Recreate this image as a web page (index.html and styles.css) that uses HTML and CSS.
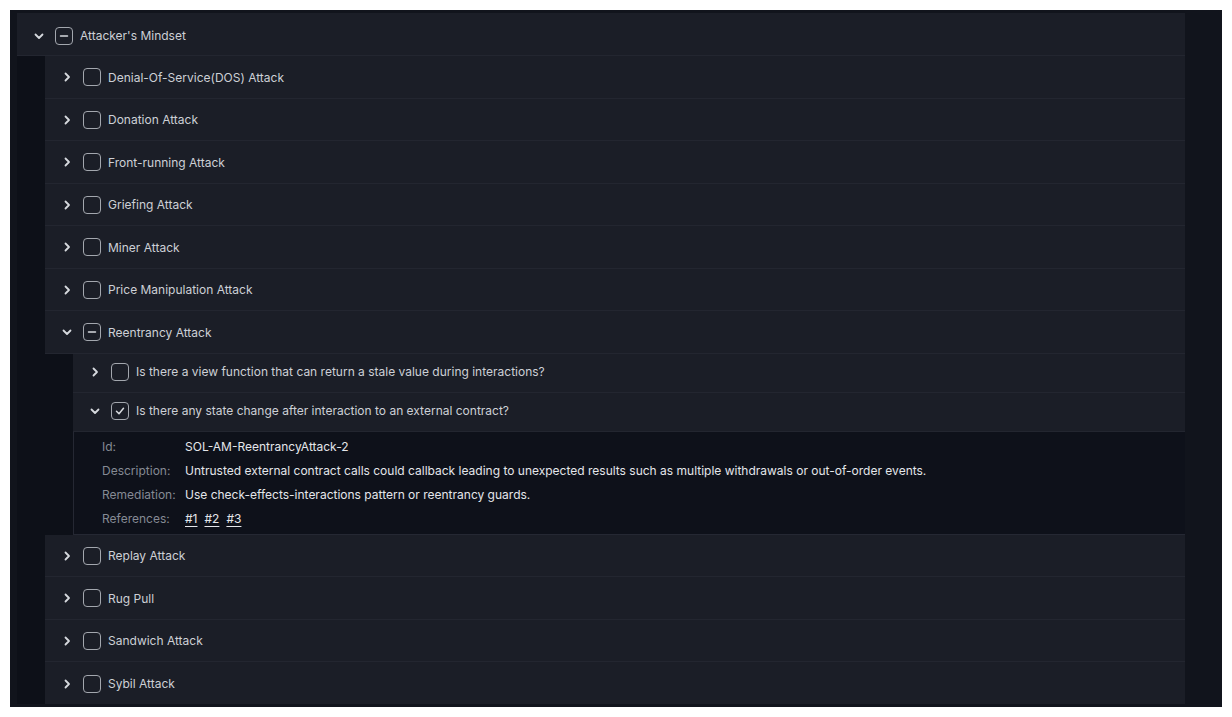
FILE: index.html
```html
<!DOCTYPE html>
<html>
<head>
<meta charset="utf-8">
<link rel="stylesheet" href="styles.css">
</head>
<body>
<div class="frame">
  <div class="tree">
    <div class="row lvl0">
      <svg class="chev" viewBox="0 0 12 12"><path d="M2.5 4.5 L6 8 L9.5 4.5"/></svg>
      <span class="cb"><svg viewBox="0 0 16 16"><path d="M4.5 8 H11.5"/></svg></span>
      <span class="label">Attacker's Mindset</span>
    </div>
    <div class="children">
      <div class="row lvl1"><svg class="chev" viewBox="0 0 12 12"><path d="M4.5 2.5 L8 6 L4.5 9.5"/></svg><span class="cb"></span><span class="label">Denial-Of-Service(DOS) Attack</span></div>
      <div class="row lvl1"><svg class="chev" viewBox="0 0 12 12"><path d="M4.5 2.5 L8 6 L4.5 9.5"/></svg><span class="cb"></span><span class="label">Donation Attack</span></div>
      <div class="row lvl1"><svg class="chev" viewBox="0 0 12 12"><path d="M4.5 2.5 L8 6 L4.5 9.5"/></svg><span class="cb"></span><span class="label">Front-running Attack</span></div>
      <div class="row lvl1"><svg class="chev" viewBox="0 0 12 12"><path d="M4.5 2.5 L8 6 L4.5 9.5"/></svg><span class="cb"></span><span class="label">Griefing Attack</span></div>
      <div class="row lvl1"><svg class="chev" viewBox="0 0 12 12"><path d="M4.5 2.5 L8 6 L4.5 9.5"/></svg><span class="cb"></span><span class="label">Miner Attack</span></div>
      <div class="row lvl1"><svg class="chev" viewBox="0 0 12 12"><path d="M4.5 2.5 L8 6 L4.5 9.5"/></svg><span class="cb"></span><span class="label">Price Manipulation Attack</span></div>
      <div class="row lvl1"><svg class="chev" viewBox="0 0 12 12"><path d="M2.5 4.5 L6 8 L9.5 4.5"/></svg><span class="cb"><svg viewBox="0 0 16 16"><path d="M4.5 8 H11.5"/></svg></span><span class="label">Reentrancy Attack</span></div>
      <div class="children">
        <div class="row lvl2"><svg class="chev" viewBox="0 0 12 12"><path d="M4.5 2.5 L8 6 L4.5 9.5"/></svg><span class="cb"></span><span class="label">Is there a view function that can return a stale value during interactions?</span></div>
        <div class="row lvl2 open"><svg class="chev" viewBox="0 0 12 12"><path d="M2.5 4.5 L6 8 L9.5 4.5"/></svg><span class="cb"><svg viewBox="0 0 16 16"><path d="M4.5 8.3 L7 10.8 L11.5 5.3"/></svg></span><span class="label">Is there any state change after interaction to an external contract?</span></div>
        <div class="details">
          <div class="k">Id:</div><div class="v">SOL-AM-ReentrancyAttack-2</div>
          <div class="k">Description:</div><div class="v">Untrusted external contract calls could callback leading to unexpected results such as multiple withdrawals or out-of-order events.</div>
          <div class="k">Remediation:</div><div class="v">Use check-effects-interactions pattern or reentrancy guards.</div>
          <div class="k">References:</div><div class="v refs"><a href="#">#1</a><a href="#">#2</a><a href="#">#3</a></div>
        </div>
      </div>
      <div class="row lvl1"><svg class="chev" viewBox="0 0 12 12"><path d="M4.5 2.5 L8 6 L4.5 9.5"/></svg><span class="cb"></span><span class="label">Replay Attack</span></div>
      <div class="row lvl1"><svg class="chev" viewBox="0 0 12 12"><path d="M4.5 2.5 L8 6 L4.5 9.5"/></svg><span class="cb"></span><span class="label">Rug Pull</span></div>
      <div class="row lvl1"><svg class="chev" viewBox="0 0 12 12"><path d="M4.5 2.5 L8 6 L4.5 9.5"/></svg><span class="cb"></span><span class="label">Sandwich Attack</span></div>
      <div class="row lvl1 last"><svg class="chev" viewBox="0 0 12 12"><path d="M4.5 2.5 L8 6 L4.5 9.5"/></svg><span class="cb"></span><span class="label">Sybil Attack</span></div>
    </div>
  </div>
</div>
</body>
</html>
```
FILE: styles.css
```css
* { box-sizing: border-box; }
html, body { margin: 0; padding: 0; background: #ffffff; }
body { font-family: Inter, "Noto Sans", sans-serif; }
.frame {
  margin: 10px;
  width: 1212px;
  height: 697px;
  background: #11141c;
  padding: 3px 37px 3px 7px;
  overflow: hidden;
}
.tree {
  background: #0d1018;
  height: 100%;
  overflow: hidden;
}
.row {
  display: flex;
  align-items: center;
  background: #1b1e27;
  border-bottom: 1px solid #232630;
  padding-left: 16px;
  color: #cdd0d6;
  font-size: 12px;
}
.lvl0 { height: 43px; padding-top: 3px; }
.lvl1 { height: 42.5px; padding-top: 1px; }
.lvl2 { height: 39px; padding-bottom: 2px; }
.row.last { border-bottom: none; }
.chev {
  width: 12px;
  height: 12px;
  flex: none;
  fill: none;
  stroke: #d6d9de;
  stroke-width: 1.8;
  stroke-linecap: round;
  stroke-linejoin: round;
}
.cb {
  width: 18px;
  height: 18px;
  flex: none;
  margin-left: 10px;
  border: 1.5px solid #a3a7ae;
  border-radius: 4px;
  display: flex;
  align-items: center;
  justify-content: center;
}
.cb svg {
  width: 16px;
  height: 16px;
  flex: none;
  fill: none;
  stroke: #d6d9de;
  stroke-width: 1.5;
  stroke-linecap: round;
  stroke-linejoin: round;
}
.label { margin-left: 7px; white-space: nowrap; }
.children {
  padding-left: 28px;
  background: #0d1018;
}
.details {
  background: #0e111a;
  border-left: 1px solid #252833;
  border-bottom: 1px solid #252833;
  padding: 3px 0 3px 28px;
  display: grid;
  grid-template-columns: 83px 1fr;
  grid-auto-rows: 24px;
  align-items: center;
  font-size: 12px;
}
.k { color: #858a94; }
.v { color: #e4e6ea; }
.refs { display: flex; gap: 7px; }
.refs a { color: #e4e6ea; text-decoration: underline; text-underline-offset: 3px; }
```
